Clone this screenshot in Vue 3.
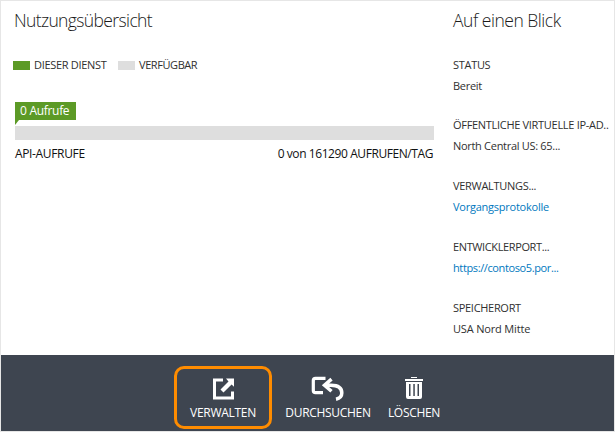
<script setup>
const facts = [
  { label: 'STATUS', value: 'Bereit', k: 'a' },
  { label: 'ÖFFENTLICHE VIRTUELLE IP-AD..', value: 'North Central US: 65...', k: 'b' },
  { label: 'VERWALTUNGS...', value: 'Vorgangsprotokolle', link: true, k: 'c' },
  { label: 'ENTWICKLERPORT...', value: 'https://contoso5.por...', link: true, k: 'd' },
  { label: 'SPEICHERORT', value: 'USA Nord Mitte', k: 'e' },
]
</script>

<template>
  <div class="page">
    <main class="content">
      <section class="usage">
        <h2 class="h-usage">Nutzungsübersicht</h2>
        <div class="legend">
          <i class="swatch green"></i><span class="own">DIESER DIENST</span>
          <i class="swatch grey"></i><span class="free">VERFÜGBAR</span>
        </div>
        <div class="flag"><span>0 Aufrufe</span></div>
        <div class="pointer"></div>
        <div class="bar"></div>
        <div class="caption"><span class="api">API-AUFRUFE</span><span class="quota">0 von 161290 AUFRUFEN/TAG</span></div>
      </section>
      <aside class="glance">
        <h2 class="h-glance">Auf einen Blick</h2>
        <dl>
          <div v-for="f in facts" :key="f.k" class="fact" :class="f.k">
            <dt><span>{{ f.label }}</span></dt>
            <dd :class="{ link: f.link }"><span>{{ f.value }}</span></dd>
          </div>
        </dl>
      </aside>
    </main>
    <footer class="commands">
      <button class="cmd manage">
        <svg width="22" height="22" viewBox="0 0 22 22">
          <path d="M10 2H1.500V20H19.500V13.500" fill="none" stroke="#fff" stroke-width="3" />
          <path d="M13 .5H21V8.800L18.600 6.500L10.500 14.500L7.500 11.500L15.500 3.500Z" fill="#fff" />
        </svg>
        <span>VERWALTEN</span>
      </button>
      <button class="cmd browse">
        <svg width="33" height="25" viewBox="0 0 33 25">
          <path d="M14.500 2.300H4.500Q2.300 2.300 2.300 4.500V14.500Q2.300 16.700 4.500 16.700H12" fill="none" stroke="#fff" stroke-width="3.200" />
          <path d="M20.500 3.200L13.500 9.200L20.500 15.300M14 9.200H20Q30.800 9.200 30.800 17Q30.800 22 25 23.200" fill="none" stroke="#fff" stroke-width="3.500" />
        </svg>
        <span>DURCHSUCHEN</span>
      </button>
      <button class="cmd remove">
        <svg width="18" height="22" viewBox="0 0 18 22">
          <path d="M6 0H12V1H6ZM0 2H18V4H0Z" fill="#fff" />
          <path d="M1 5H17V20Q17 22 15 22H3Q1 22 1 20ZM4 7V19H5.500V7ZM8.300 7V19H9.800V7ZM12.500 7V19H14V7Z" fill="#fff" fill-rule="evenodd" />
        </svg>
        <span>LÖSCHEN</span>
      </button>
    </footer>
  </div>
</template>

<style>
body { margin: 0; background: #fff; }
</style>

<style scoped>
.page {
  box-sizing: border-box;
  width: 615px;
  height: 432px;
  border: 1px solid #e6e6e6;
  display: flex;
  flex-direction: column;
  overflow: hidden;
  font-family: "Open Sans", "Noto Sans", sans-serif;
  font-size: 11px;
  line-height: 16px;
  color: #303030;
  white-space: nowrap;
}
.content { height: 354px; display: flex; }
.usage { width: 420px; padding: 6px 0 0 12px; }
.glance { padding: 6px 0 0 20px; }
h2 { margin: 0; height: 26px; line-height: 26px; font-size: 17.500px; font-weight: 300; color: #1a1a1a; }
.h-usage { letter-spacing: -0.620px; padding-left: 1px; }
.h-glance { letter-spacing: -0.470px; }
.legend { display: flex; align-items: center; padding-top: 24px; letter-spacing: -0.300px; }
.swatch { width: 17px; height: 9px; margin-right: 4px; }
.green { background: #5c9a26; }
.grey { background: #dedede; }
.own { width: 84px; }
.free { letter-spacing: -0.420px; }
.flag {
  width: 61px; height: 18px; line-height: 18px; margin: 29px 0 0 2px; box-sizing: border-box;
  padding-left: 5px; background: #5c9a26; color: #fff; font-size: 12px; letter-spacing: -0.300px;
}
.pointer { width: 4px; height: 5px; margin-left: 2px; background: #5c9a26; clip-path: polygon(0 0, 100% 0, 0 100%); }
.bar { width: 419px; height: 14px; margin: 1px 0 0 2px; background: #dedede; }
.caption { display: flex; justify-content: space-between; width: 418px; margin: 6px 0 0 2px; font-size: 12px; color: #111; letter-spacing: -0.350px; }
.quota { letter-spacing: -0.420px; }
dl { margin: 24px 0 0; }
.fact { height: 61px; letter-spacing: -0.300px; }
.fact.a { height: 60px; }
.fact.d { letter-spacing: -0.380px; }
.fact.e dd { letter-spacing: -0.170px; }
.fact.c dd { letter-spacing: -0.240px; }
dt, dd { margin: 0; height: 21px; }
.link { color: #0078be; }
.commands { height: 76px; background: #3e4550; display: flex; }
.cmd {
  box-sizing: border-box; padding: 0; border: 0; background: none; color: #fff;
  font: 12px/16px "Open Sans", "Noto Sans", sans-serif; letter-spacing: -0.300px;
  display: flex; flex-direction: column; align-items: center; height: 63px;
}
.cmd svg { flex: none; }
.manage { width: 98px; margin: 11px 0 0 173px; border: 3px solid #ff8c00; border-radius: 10px; padding: 9px 0 0 1px; }
.manage svg { margin-bottom: 5px; }
.manage span { margin-left: -1px; }
.browse { width: 86px; margin: 21px 0 0 13px; }
.browse svg { margin: 0 1px 4px 0; }
.remove { width: 52px; margin: 22px 0 0 17px; }
.remove svg { margin-bottom: 6px; }
</style>
